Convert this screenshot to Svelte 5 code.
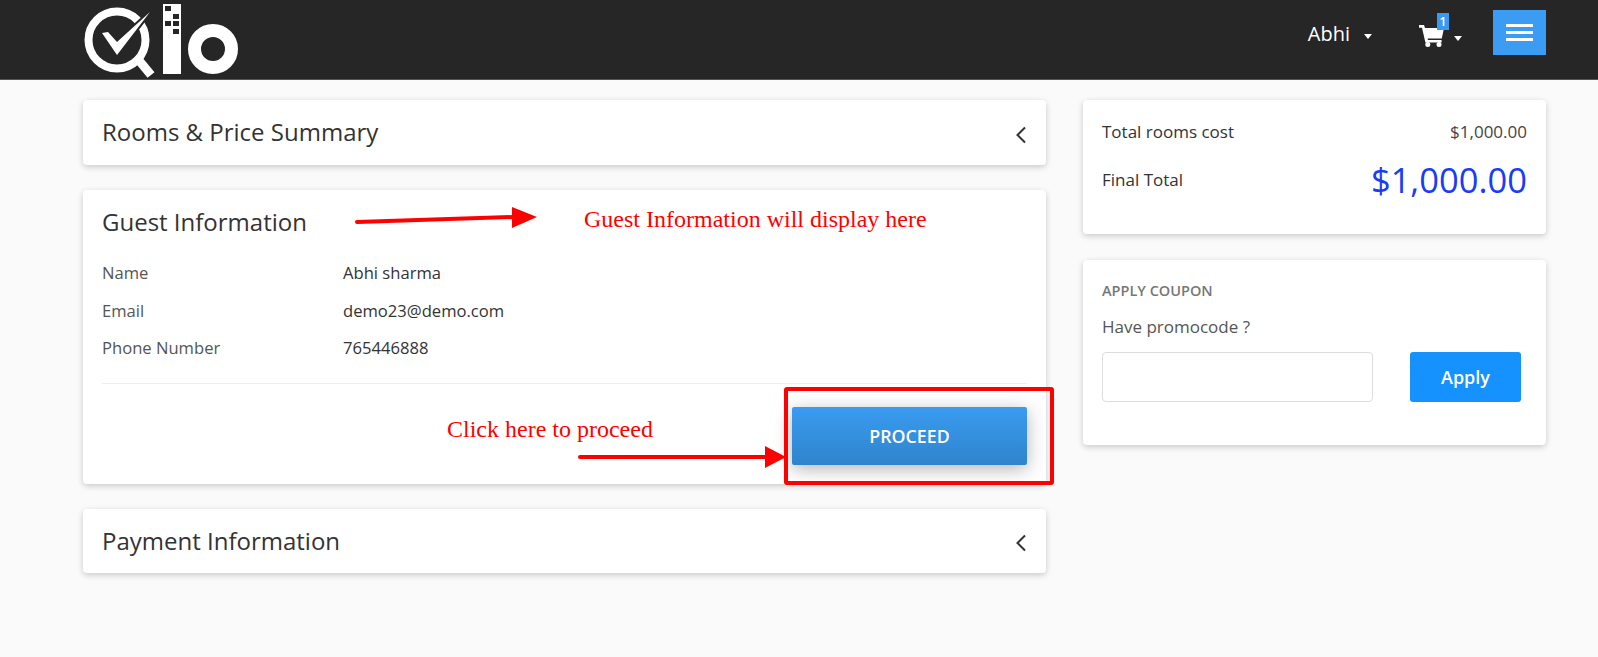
<script>
	const guest = [
		{ label: 'Name', value: 'Abhi sharma' },
		{ label: 'Email', value: 'demo23@demo.com' },
		{ label: 'Phone Number', value: '765446888' }
	];
</script>

<header class="topbar">
	<svg class="logo" width="160" height="80" viewBox="0 0 160 80">
		<circle cx="37" cy="40" r="28.5" fill="none" stroke="#fff" stroke-width="8" />
		<path d="M57 58 L71 75" stroke="#fff" stroke-width="9" fill="none" />
		<path d="M22 33 L37 55 L70 12 L37 42 L28 32 Z" fill="#fff" stroke="#262626" stroke-width="4" paint-order="stroke" />
		<rect x="83" y="4" width="18" height="70" fill="#fff" />
		<g fill="#262626">
			<rect x="85" y="6" width="6" height="5" />
			<rect x="93" y="14" width="6" height="5" />
			<rect x="85" y="21" width="6" height="5" />
			<rect x="93" y="21" width="6" height="5" />
			<rect x="93" y="29" width="6" height="5" />
		</g>
		<circle cx="133" cy="49" r="18.5" fill="none" stroke="#fff" stroke-width="13" />
	</svg>
	<div class="nav">
		<span class="user">Abhi</span>
		<span class="caret user-caret"></span>
		<span class="cart">
			<svg width="25" height="22" viewBox="0 0 25 22">
				<path d="M0 0 H5 L6 3 H25 L22.8 13.6 H8.6 L9 15 H22.6 V17.4 H6.4 L3 2.8 H0 Z" fill="#fff" />
				<circle cx="8.8" cy="19.5" r="2.5" fill="#fff" />
				<circle cx="20" cy="19.5" r="2.5" fill="#fff" />
			</svg>
			<span class="badge">1</span>
		</span>
		<span class="caret"></span>
		<button class="menu" aria-label="menu"><i></i><i></i><i></i></button>
	</div>
</header>

<main class="page">
	<div class="left">
		<section class="card bar">
			<h2>Rooms &amp; Price Summary</h2>
			<svg class="chev" width="12" height="18" viewBox="0 0 12 18"><path d="M10 1.5 L2.5 9 L10 16.5" fill="none" stroke="#333" stroke-width="2" /></svg>
		</section>

		<section class="card guest">
			<h2>Guest Information</h2>
			<div class="rows">
				{#each guest as row}
					<div class="row">
						<span class="label">{row.label}</span>
						<span class="value">{row.value}</span>
					</div>
				{/each}
			</div>
			<div class="actions">
				<button class="proceed">PROCEED</button>
			</div>
		</section>

		<section class="card bar pay">
			<h2>Payment Information</h2>
			<svg class="chev" width="12" height="18" viewBox="0 0 12 18"><path d="M10 1.5 L2.5 9 L10 16.5" fill="none" stroke="#333" stroke-width="2" /></svg>
		</section>
	</div>

	<aside class="right">
		<section class="card totals">
			<div class="line first">
				<span>Total rooms cost</span>
				<span class="cost">$1,000.00</span>
			</div>
			<div class="line">
				<span>Final Total</span>
				<span class="big">$1,000.00</span>
			</div>
		</section>

		<section class="card coupon">
			<h3>APPLY COUPON</h3>
			<p>Have promocode ?</p>
			<div class="apply">
				<input type="text" />
				<button>Apply</button>
			</div>
		</section>
	</aside>
</main>

<!-- red annotations drawn on top of the page -->
<svg class="notes" width="1598" height="657" viewBox="0 0 1598 657">
	<g fill="#f00" stroke="none">
		<path d="M512 207 L537 217 L512 228 Z" />
		<path d="M765 446 L786 457 L765 468 Z" />
	</g>
	<g stroke="#f00" fill="none">
		<path d="M357 222 L513 217" stroke-width="4" stroke-linecap="round" />
		<path d="M580 457 L768 457" stroke-width="4" stroke-linecap="round" />
		<rect x="786" y="389" width="266" height="94" stroke-width="4" rx="1" />
	</g>
</svg>
<span class="note n1">Guest Information will display here</span>
<span class="note n2">Click here to proceed</span>

<style>
	:global(body) {
		background: #fafafa;
		font-family: 'Open Sans', 'Noto Sans', sans-serif;
		color: #333;
	}

	.topbar {
		height: 80px;
		box-sizing: border-box;
		background: #262626;
		border-bottom: 1px solid #555;
		padding: 0 52px 0 83px;
		display: flex;
		justify-content: space-between;
		position: relative;
	}

	.logo {
		margin-left: -3px;
		display: block;
	}

	.nav {
		display: flex;
		align-items: flex-start;
		color: #fff;
	}

	.user {
		font-size: 20px;
		margin-top: 20px;
	}

	.caret {
		width: 0;
		height: 0;
		border-left: 4.5px solid transparent;
		border-right: 4.5px solid transparent;
		border-top: 5px solid #fff;
		margin: 36px 31px 0 0;
	}

	.user-caret {
		margin: 34px 47px 0 14px;
	}

	.cart {
		position: relative;
		margin-top: 25px;
		width: 26px;
		height: 22px;
		margin-right: 9px;
	}

	.cart svg {
		display: block;
	}

	.badge {
		position: absolute;
		left: 18px;
		top: -12px;
		width: 12px;
		height: 17px;
		background: #3a9af0;
		font-size: 12px;
		font-weight: 600;
		line-height: 17px;
		text-align: center;
		color: #fff;
	}

	.menu {
		width: 53px;
		height: 45px;
		margin-top: 10px;
		background: #3a9cf2;
		border: 0;
		padding: 14px 13px;
		display: flex;
		flex-direction: column;
		justify-content: space-between;
	}

	.menu i {
		display: block;
		height: 3px;
		background: #fff;
	}

	.page {
		display: flex;
		gap: 37px;
		padding: 20px 52px 60px 83px;
	}

	.left {
		width: 963px;
		display: flex;
		flex-direction: column;
		gap: 25px;
	}

	.right {
		width: 463px;
		display: flex;
		flex-direction: column;
		gap: 26px;
	}

	.card {
		background: #fff;
		border-radius: 4px;
		box-shadow: 0 2px 6px rgba(0, 0, 0, 0.2);
		padding: 0 19px;
		box-sizing: border-box;
	}

	h2 {
		margin: 0;
		font-size: 24px;
		font-weight: 400;
		color: #333;
	}

	.bar {
		height: 65px;
		display: flex;
		align-items: center;
		justify-content: space-between;
	}

	.bar h2 {
		margin-top: -2px;
	}

	.bar .chev {
		margin-top: 4px;
	}

	.pay {
		height: 64px;
	}

	.guest {
		height: 294px;
		padding-top: 15px;
	}

	.rows {
		margin-top: 16px;
		padding-bottom: 16px;
		border-bottom: 1px solid #eee;
	}

	.row {
		height: 37.5px;
		display: flex;
		align-items: center;
		font-size: 16.6px;
	}

	.label {
		width: 241px;
		color: #555;
	}

	.actions {
		display: flex;
		justify-content: flex-end;
		padding-top: 23px;
	}

	.proceed {
		width: 235px;
		height: 58px;
		border: 0;
		border-radius: 2px;
		background: linear-gradient(#3a9bf0, #2f84cc);
		color: #fff;
		font: 600 17.8px 'Open Sans', sans-serif;
		box-shadow: 0 4px 18px rgba(0, 0, 0, 0.3);
	}

	.totals {
		height: 134px;
		padding-top: 15px;
	}

	.line {
		display: flex;
		justify-content: space-between;
		align-items: center;
		font-size: 17px;
		height: 30px;
	}

	.first {
		height: 32px;
	}

	.line + .line {
		height: 64px;
	}

	.cost {
		color: #444;
	}

	.big {
		font-size: 34.5px;
		color: #1a3cf5;
	}

	.coupon {
		height: 185px;
		padding-top: 22px;
	}

	h3 {
		margin: 0;
		font-size: 14.5px;
		line-height: 18px;
		font-weight: 600;
		color: #777;
	}

	.coupon p {
		margin: 16px 0 0;
		font-size: 17px;
		line-height: 22px;
		color: #555;
	}

	.apply {
		display: flex;
		justify-content: space-between;
		margin-top: 14px;
		padding-right: 6px;
	}

	input {
		width: 271px;
		height: 50px;
		box-sizing: border-box;
		border: 1px solid #ddd;
		border-radius: 4px;
		background: #fff;
	}

	.apply button {
		width: 111px;
		height: 50px;
		border: 0;
		border-radius: 3px;
		background: #1592fe;
		color: #fff;
		font: 600 18px 'Open Sans', sans-serif;
	}

	.notes {
		position: absolute;
		left: 0;
		top: 0;
		pointer-events: none;
	}

	.note {
		position: absolute;
		font-family: 'Liberation Serif', serif;
		font-size: 24px;
		line-height: 28px;
		color: #f00;
		white-space: nowrap;
	}

	.n1 {
		left: 584px;
		top: 205px;
	}

	.n2 {
		left: 447px;
		top: 415px;
	}
</style>
